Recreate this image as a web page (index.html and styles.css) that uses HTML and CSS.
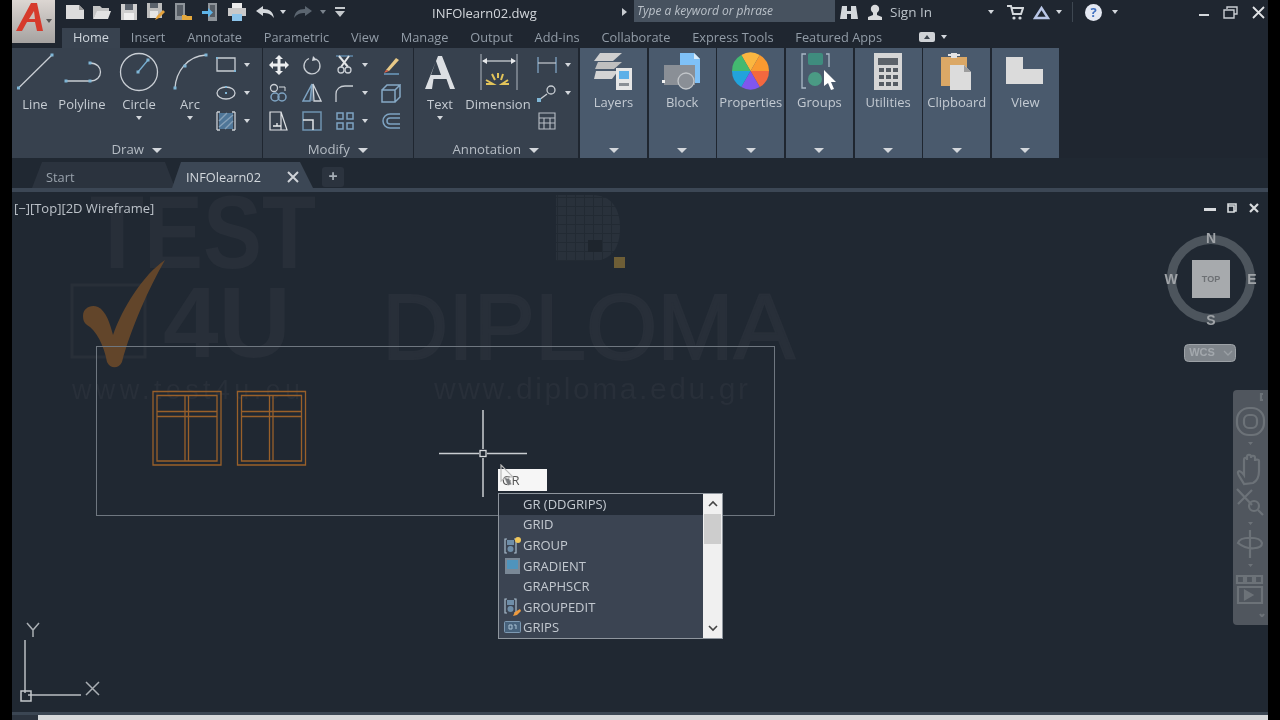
FILE: index.html
```html
<!DOCTYPE html>
<html lang="en">
<head>
<meta charset="utf-8">
<title>INFOlearn02.dwg</title>
<link rel="stylesheet" href="styles.css">
</head>
<body>
<div class="app">
  <div class="logo">
    <svg width="30" height="32" viewBox="0 0 30 32"><path d="M1 29 16 1h6l6 28h-6l-2-9h-8l-5 9z" fill="#d63a2c"/><path d="M14 17h6l-1-8z" fill="#cdbfba"/></svg>
    <i class="caret dark"></i>
  </div>
  <header class="titlebar">
    <div class="qat">
      <span class="q"><svg width="20" height="18" viewBox="0 0 20 18"><path d="M1 2h13l5 5v9H1z" fill="#dcdcdc"/><path d="M14 2v5h5z" fill="#9a9a9a"/></svg></span>
      <span class="q"><svg width="20" height="18" viewBox="0 0 20 18"><path d="M1 16V3h7l2 2h7v3H6z" fill="#c4c4c4"/><path d="M1 16 5 8h14l-3 8z" fill="#e2e2e2"/></svg></span>
      <span class="q"><svg width="18" height="18" viewBox="0 0 18 18"><path d="M1 1h16v16H1z" fill="#cfcfcf"/><path d="M5 1h8v6H5z" fill="#5a626c"/><path d="M4 10h10v7H4z" fill="#efefef"/></svg></span>
      <span class="q"><svg width="20" height="20" viewBox="0 0 20 20"><path d="M1 1h15v15H1z" fill="#bdbdbd"/><path d="M4 1h8v5H4z" fill="#5a626c"/><path d="M4 9h8v7H4z" fill="#e5e5e5"/><path d="m9 18 2-4 6-6 2 2-6 6z" fill="#e4a23c"/></svg></span>
      <span class="q"><svg width="20" height="20" viewBox="0 0 20 20"><path d="M2 1h10v17H2z" fill="#8e949a"/><path d="M4 3h6v11H4z" fill="#565d65"/><path d="M9 13h4l1 1h5v4H9z" fill="#e5a83c"/></svg></span>
      <span class="q"><svg width="20" height="20" viewBox="0 0 20 20"><path d="M8 1h9v18H8z" fill="#8e949a"/><path d="M10 3h5v12h-5z" fill="#565d65"/><path d="M2 9h6V6l5 4.500L8 15v-3H2z" fill="#5eb4e8"/></svg></span>
      <span class="q"><svg width="20" height="20" viewBox="0 0 20 20"><path d="M5 1h10v5H5z" fill="#ececec"/><path d="M1 6h18v8H1z" fill="#c9c9c9"/><path d="M5 12h10v7H5z" fill="#8cc4ea"/></svg></span>
      <span class="q wide"><svg width="20" height="14" viewBox="0 0 20 14"><path d="M1 6 8 1v3c7 0 10 3 11 9-3-4-6-5-11-5v3z" fill="#d4d8dc"/></svg></span>
      <span class="q thin"><i class="caret"></i></span>
      <span class="q redo"><svg width="20" height="14" viewBox="0 0 20 14"><path d="M19 6 12 1v3C5 4 2 7 1 13c3-4 6-5 11-5v3z" fill="#5b6570"/></svg></span>
      <span class="q thin"><i class="caret dim"></i></span>
      <span class="q more"><svg width="10" height="10" viewBox="0 0 10 10"><path d="M0 0h10v2H0zM0 4h10L5 10z" fill="#c4c8cc"/></svg></span>
    </div>
    <div class="doc-title">INFOlearn02.dwg</div>
    <i class="play"></i>
    <div class="search">Type a keyword or phrase</div>
    <span class="binoc"><svg width="18" height="15" viewBox="0 0 18 15"><path d="M2 1h5v5h4V1h5l2 13h-7V9H7v5H0z" fill="#d4d8dc"/></svg></span>
    <span class="user"><svg width="16" height="16" viewBox="0 0 16 16"><circle cx="8" cy="5" r="4.200" fill="#d8dadc"/><path d="M6 8h4v3l5 2v3H1v-3l5-2z" fill="#d8dadc"/></svg></span>
    <span class="signin">Sign In</span>
    <i class="caret c-sign"></i>
    <span class="cart"><svg width="17" height="15" viewBox="0 0 17 15"><path d="M0 1h4l2 8h8l2-6H5" fill="none" stroke="#d4d8dc" stroke-width="2"/><circle cx="7" cy="13" r="1.600" fill="#d4d8dc"/><circle cx="13" cy="13" r="1.600" fill="#d4d8dc"/></svg></span>
    <span class="tri"><svg width="17" height="15" viewBox="0 0 17 15"><path d="M8.500 3 15 13H2z" fill="none" stroke="#b9c6e6" stroke-width="2.400"/></svg></span>
    <i class="caret c-tri"></i>
    <span class="vsep"></span>
    <span class="help">?</span>
    <i class="caret c-help"></i>
    <div class="winctl">
      <svg width="10" height="10" viewBox="0 0 10 10"><path d="M0 7h10v2H0z" fill="#d4d8dc"/></svg>
      <svg width="15" height="13" viewBox="0 0 15 13"><path d="M4 3V1h10v7h-3M1 4h10v8H1z" fill="none" stroke="#c9cdd2" stroke-width="1.400"/></svg>
      <svg width="13" height="13" viewBox="0 0 13 13"><path d="m1 1 11 11M12 1 1 12" stroke="#e0e2e5" stroke-width="1.800"/></svg>
    </div>
  </header>

  <nav class="tabs">
    <span class="tab active">Home</span><span class="tab">Insert</span><span class="tab">Annotate</span><span class="tab">Parametric</span><span class="tab">View</span><span class="tab">Manage</span><span class="tab">Output</span><span class="tab">Add-ins</span><span class="tab">Collaborate</span><span class="tab">Express Tools</span><span class="tab">Featured Apps</span>
    <span class="tab-ctl"><svg width="16" height="10" viewBox="0 0 16 10"><rect width="16" height="10" rx="2" fill="#cfd2d6"/><path d="m8 3 3 4H5z" fill="#3a424c"/></svg></span>
    <i class="caret c-tabs"></i>
  </nav>

  <section class="ribbon">
    <div class="panel p-draw">
      <div class="grid g-draw">
        <div class="big">
          <svg width="46" height="46" viewBox="12 50 46 46"><path d="M18.500 88 52 55" class="st"/><rect x="17" y="86.500" width="3" height="3" class="nd"/><rect x="50.500" y="53.500" width="3" height="3" class="nd"/></svg>
          <span>Line</span>
        </div>
        <div class="big">
          <svg width="48" height="46" viewBox="58 50 48 46"><path d="M66 81h24c14 0 14-18 0-18" class="st"/><rect x="64.500" y="79.500" width="3" height="3" class="nd"/><rect x="88.500" y="79.500" width="3" height="3" class="nd"/><rect x="88.500" y="61.500" width="3" height="3" class="nd"/></svg>
          <span>Polyline</span>
        </div>
        <div class="big">
          <svg width="66" height="46" viewBox="106 50 66 46"><circle cx="139" cy="72" r="18.500" class="st"/><path d="m138 72 10-12" class="bl"/><rect x="136.500" y="70.500" width="3" height="3" class="nd"/><rect x="146.500" y="58.500" width="3" height="3" class="nd"/></svg>
          <span>Circle</span><i class="caret"></i>
        </div>
        <div class="big">
          <svg width="36" height="46" viewBox="172 50 36 46"><path d="M175 88c1-16 12-32 31-33" class="st"/><rect x="173.500" y="86.500" width="3" height="3" class="nd"/><rect x="183.500" y="64.500" width="3" height="3" class="nd"/><rect x="204.500" y="53.500" width="3" height="3" class="nd"/></svg>
          <span>Arc</span><i class="caret"></i>
        </div>
        <div class="smalls">
          <div class="s"><svg width="20" height="20" viewBox="0 0 20 20"><path d="M1 3h18v13H1z" class="st"/><rect x="0" y="2" width="2" height="2" class="nd"/><rect x="18" y="15" width="2" height="2" class="nd"/></svg><i class="caret"></i></div>
          <div class="s"><svg width="20" height="20" viewBox="0 0 20 20"><ellipse cx="10" cy="10" rx="9" ry="6" class="st"/><rect x="9" y="9" width="2" height="2" class="nd"/><rect x="9" y="3" width="2" height="2" class="nd"/></svg><i class="caret"></i></div>
          <div class="s"><svg width="20" height="20" viewBox="0 0 20 20"><path d="M3 2h14v16H3z" fill="#4f7698"/><path d="m3 10 8-8m-8 14L17 4m-8 14 8-8" stroke="#86a0b8" stroke-width="1.400"/><path d="M1 1v18M19 1v18M1 1h3M16 1h3M1 19h3M16 19h3" class="st"/></svg><i class="caret"></i></div>
        </div>
      </div>
      <div class="ptitle">Draw <i class="caret"></i></div>
    </div>

    <div class="panel p-mod">
      <div class="grid g-mod">
        <div class="m"><svg width="20" height="20" viewBox="0 0 20 20"><path d="m10 0 4 4h-2.500v4.500H16V6l4 4-4 4v-2.500h-4.500V16H14l-4 4-4-4h2.500v-4.500H4V14l-4-4 4-4v2.500h4.500V4H6z" fill="#eceef0"/></svg></div>
        <div class="m"><svg width="20" height="20" viewBox="0 0 20 20"><path d="M7 3.500a8 8 0 1 0 7 .500" class="st"/><path d="m10 6 1-5 4 4z" fill="#cfd4da"/></svg></div>
        <div class="m w"><svg width="20" height="20" viewBox="0 0 20 20"><path d="M1 1h17" stroke="#5f87a8" stroke-width="1.500"/><path d="m4 1 9 11M14 1 6 12" stroke="#e4e6e8" stroke-width="2"/><circle cx="6" cy="15" r="3" class="st"/><circle cx="13" cy="15" r="3" class="st"/></svg><i class="caret"></i></div>
        <div class="m"><svg width="20" height="20" viewBox="0 0 20 20"><path d="m5 15 10-12 3 2-10 11z" fill="#e8c987"/><path d="m5 15 3 1-5 2z" fill="#e0644a"/><path d="M3 19h15" stroke="#6e9cc0" stroke-width="1.500"/></svg></div>
        <div class="m"><svg width="20" height="20" viewBox="0 0 20 20"><circle cx="5" cy="5" r="3.500" class="st"/><path d="M10 4h6v4" stroke="#d7dce0" fill="none"/><circle cx="6" cy="14" r="4" class="bl2"/><circle cx="13" cy="14" r="4" class="bl2"/></svg></div>
        <div class="m"><svg width="20" height="20" viewBox="0 0 20 20"><path d="M10 1 1 18h7z" fill="none" stroke="#7ea3c2" stroke-width="1.500"/><path d="M10 1v17" stroke="#7ea3c2"/><path d="m11 1 8 17h-7z" fill="none" stroke="#cfd4da" stroke-width="1.300"/></svg></div>
        <div class="m w"><svg width="20" height="20" viewBox="0 0 20 20"><path d="M1 19V11c0-5 4-8 9-8h8" class="st"/></svg><i class="caret"></i></div>
        <div class="m"><svg width="20" height="20" viewBox="0 0 20 20"><path d="M1 7h13v12H1zM1 7l5-5h13l-5 5M19 2v12l-5 5" fill="none" stroke="#86a9c6" stroke-width="1.500"/></svg></div>
        <div class="m"><svg width="20" height="20" viewBox="0 0 20 20"><path d="M1 1h11v18H1zM12 1l6 18h-6" fill="none" stroke="#dfe2e5" stroke-width="1.200"/><path d="M4 15h8M8 12v3" stroke="#eceef0" stroke-width="1.300"/></svg></div>
        <div class="m"><svg width="20" height="20" viewBox="0 0 20 20"><path d="M1 1h18v18H1z" fill="none" stroke="#6f93b0" stroke-width="1.500"/><path d="M1 9h10v10" fill="none" stroke="#e2e5e8" stroke-width="1.500"/></svg></div>
        <div class="m w"><svg width="20" height="20" viewBox="0 0 20 20"><path d="M2 2h6v6H2zM12 2h6v6h-6zM2 12h6v6H2zM12 12h6v6h-6z" fill="none" stroke="#7ea3c2" stroke-width="1.500"/></svg><i class="caret"></i></div>
        <div class="m"><svg width="20" height="20" viewBox="0 0 20 20"><path d="M19 3H9a7 7 0 0 0 0 14h10M19 7H9a3 3 0 0 0 0 6h10" fill="none" stroke="#7ea3c2" stroke-width="1.500"/></svg></div>
      </div>
      <div class="ptitle">Modify <i class="caret"></i></div>
    </div>

    <div class="panel p-ann">
      <div class="grid g-ann">
        <div class="big">
          <svg width="52" height="46" viewBox="414 50 52 46"><path d="M425 89 438 56h4l13 33h-5l-3.500-10h-13L432 89zM431 75h10l-5-14z" fill="#dcdfe3"/></svg>
          <span>Text</span><i class="caret"></i>
        </div>
        <div class="big">
          <svg width="64" height="46" viewBox="466 50 64 46"><path d="M481 54v36M517 54v36" stroke="#9ba3ac" stroke-width="1.200"/><path d="M483 61h32" stroke="#d7dce0" stroke-width="1.200"/><path d="m482 61 5-3v6zM516 61l-5-3v6z" fill="#e7e9eb"/><path d="M486 84h7l-7-4M509 84h-7l6-4M495 80l-3-6M501 80l2-6M498 78v-5" stroke="#e2c45a" stroke-width="2" fill="none"/></svg>
          <span>Dimension</span>
        </div>
        <div class="smalls a">
          <div class="s"><svg width="20" height="20" viewBox="0 0 20 20"><path d="M1 2v16M19 2v16" stroke="#7ea3c2" stroke-width="1.300"/><path d="M1 8h18" stroke="#c7ccd2" stroke-width="1.200"/></svg><i class="caret"></i></div>
          <div class="s"><svg width="20" height="20" viewBox="0 0 20 20"><path d="m2 17 8-6" class="st"/><circle cx="14" cy="7" r="4" class="st"/><rect x="0" y="15" width="4" height="4" class="nd"/></svg><i class="caret"></i></div>
          <div class="s"><svg width="20" height="20" viewBox="0 0 20 20"><path d="M2 2h16v16H2zM2 7h16M2 12h16M7 7v11M13 7v11" fill="none" stroke="#b8bec5" stroke-width="1.100"/></svg></div>
        </div>
      </div>
      <div class="ptitle">Annotation <i class="caret"></i></div>
    </div>

    <div class="stack">
      <div class="cpanel">
        <svg width="67" height="44" viewBox="580 50 67 44"><path d="m600 53 22 0-9 8h-19z" fill="#cfcfcf"/><path d="m598 62h24l-8 7h-19z" fill="#bfbfbf"/><path d="m596 71h22l-6 8h-18z" fill="#d4d4d4"/><path d="M616 68h16v22h-16z" fill="#e6e6e6"/><path d="M619 71h10v8h-10z" fill="#5eb0e8"/><path d="M619 83h10v3h-10z" fill="#8a8f95"/></svg>
        <span>Layers</span><i class="caret"></i>
      </div>
      <div class="cpanel">
        <svg width="67" height="44" viewBox="649 50 67 44"><path d="M680 53h14l6 6v24h-20z" fill="#7fc1f7"/><path d="M694 53v6h6z" fill="#d8ecfb"/><path d="M664 65h31v20h-31z" fill="#8a8f96"/><circle cx="686" cy="81" r="8" fill="#8a8f96" stroke="#c2c6ca" stroke-width="1.300"/><rect x="662" y="80" width="3" height="3" fill="#f2f2f2"/></svg>
        <span>Block</span><i class="caret"></i>
      </div>
      <div class="cpanel">
        <svg width="67" height="44" viewBox="-33.500 -21 67 44"><path d="M0 0-9.250-16.020A18.500 18.500 0 0 1 9.250-16.020z" fill="#fbb640"/><path d="M0 0 9.250-16.020A18.500 18.500 0 0 1 18.500 0z" fill="#fa9a30"/><path d="M0 0H18.500A18.500 18.500 0 0 1 9.250 16.020z" fill="#f4683f"/><path d="M0 0 9.250 16.020A18.500 18.500 0 0 1-9.250 16.020z" fill="#8056ee"/><path d="M0 0-9.250 16.020A18.500 18.500 0 0 1-18.500 0z" fill="#22a3dc"/><path d="M0 0H-18.500A18.500 18.500 0 0 1-9.250-16.020z" fill="#43b970"/></svg>
        <span>Properties</span><i class="caret"></i>
      </div>
      <div class="cpanel">
        <svg width="67" height="44" viewBox="787 50 67 44"><path d="M807 54h-4v34h4M827 54h3v13" fill="none" stroke="#a9b8c6" stroke-width="1.300"/><rect x="809" y="53" width="15" height="12" rx="2" fill="#3f8c7e"/><circle cx="816" cy="79" r="7" fill="#4a9a84"/><path d="m825 70 0 16 4-3 3 7 3-1-3-7h5z" fill="#fff"/></svg>
        <span>Groups</span><i class="caret"></i>
      </div>
      <div class="cpanel">
        <svg width="67" height="44" viewBox="855 50 67 44"><path d="M874 53h28v37h-28z" fill="#d6d6d6"/><path d="M878 58h20v7h-20z" fill="#5c6269"/><path d="M879 68h5v4h-5zM886 68h5v4h-5zM893 68h5v4h-5zM879 75h5v4h-5zM886 75h5v4h-5zM893 75h5v4h-5zM879 82h5v4h-5zM886 82h5v4h-5zM893 82h5v4h-5z" fill="#555b62"/></svg>
        <span>Utilities</span><i class="caret"></i>
      </div>
      <div class="cpanel">
        <svg width="67" height="44" viewBox="924 50 67 44"><path d="M942 57h26v29h-26z" fill="#dba866"/><path d="M949 56h12v-2h-12z" fill="#e4e4e4"/><path d="M952 53h6v5h-6z" fill="#e4e4e4"/><path d="M951 65h14l7 7v18h-21z" fill="#dcdcdc"/><path d="M965 65v7h7z" fill="#9d9d9d"/></svg>
        <span>Clipboard</span><i class="caret"></i>
      </div>
      <div class="cpanel">
        <svg width="67" height="44" viewBox="993 50 67 44"><path d="M1007 57h17v12h20v15h-37z" fill="#dbdbdb"/></svg>
        <span>View</span><i class="caret"></i>
      </div>
    </div>
  </section>

  <div class="filetabs">
    <div class="ftab start">Start</div>
    <div class="ftab current"><span>INFOlearn02</span><svg width="12" height="12" viewBox="0 0 12 12"><path d="m1 1 10 10M11 1 1 11" stroke="#cfd3d8" stroke-width="2"/></svg></div>
    <div class="fplus">+</div>
  </div>

  <main class="canvas">
    <svg class="drawing" width="1256" height="520" viewBox="12 192 1256 520">
      <defs>
        <pattern id="dgrid" width="9" height="9" patternUnits="userSpaceOnUse"><path d="M0 0h9v9H0z" fill="#29313b"/><path d="M8.500 0v9M0 8.500h9" stroke="#222a33"/></pattern>
      </defs>
      <g class="wm">
        <text x="90" y="268" class="wm-test" textLength="226" lengthAdjust="spacingAndGlyphs">TEST</text>
        <text x="163" y="357" class="wm-4u">4U</text>
        <rect x="72" y="285" width="73" height="72" fill="none" stroke="#282f38" stroke-width="3"/>
        <text x="72" y="399" class="wm-url" textLength="228">www.test4u.eu</text>
        <text x="382" y="359" class="wm-dip" textLength="413" lengthAdjust="spacingAndGlyphs">DIPLOMA</text>
        <text x="434" y="399" class="wm-url2" textLength="314">www.diploma.edu.gr</text>
        <path d="M556 195h36c20 0 28 14 28 33s-8 33-28 33h-36z" fill="url(#dgrid)"/>
        <path d="M588 240h14v12h-14z" fill="#1e252d"/>
      </g>
      <rect x="614" y="257" width="11" height="11" fill="#6e5e36"/>
      <path d="M83 316c0-8 8-12 15-9 8 4 12 16 15 28 10-28 30-60 52-75-16 28-34 68-43 102-3 7-12 7-15 0-3-17-11-32-20-37-3-2-4-5-4-9z" fill="#62452a"/>
      <rect x="96.500" y="346.500" width="678" height="169" class="outline"/>
      <g class="win">
        <path d="M153 391.500h68v73.500h-68zM157 395.500h60v65.500h-60zM185 395.500v65.500M188.500 395.500v65.500M157 411.500h60M157 416.500h60"/>
        <path d="M237.500 391.500h68v73.500h-68zM241.500 395.500h60v65.500h-60zM269.500 395.500v65.500M273 395.500v65.500M241.500 411.500h60M241.500 416.500h60"/>
      </g>
      <path d="M483 410v39M483 458v39M439 453.500h40M487 453.500h40" stroke="#c9cdd1" stroke-width="1.500"/>
      <rect x="480" y="450.500" width="6" height="6" fill="none" stroke="#d6d9dc" stroke-width="1.300"/>
      <path d="M25 640v53M28 695h53" stroke="#b9bdc2" stroke-width="1.500"/>
      <rect x="21" y="691" width="10" height="10" fill="none" stroke="#c4c8cc" stroke-width="1.500"/>
      <path d="m27 623 6 7 6-7M33 630v7M86 682l13 13M99 682l-13 13" stroke="#a9aeb3" stroke-width="1.500" fill="none"/>
      <g class="vp-ctl"><path d="M1204 209.500h12" stroke-width="3"/><path d="M1228 206v-2h8v7h-2M1228 206h6v6h-6z" fill="none" stroke-width="1.600"/><path d="m1250 204 8 8M1258 204l-8 8" stroke-width="2.200"/></g>
      <circle cx="1211" cy="279" r="39.500" fill="none" stroke="#4d555d" stroke-width="9"/>
      <rect x="1192" y="260" width="38" height="38" fill="#a7aaad"/>
      <text x="1211" y="282" class="top">TOP</text>
      <text x="1211" y="243" class="dir">N</text><text x="1211" y="325" class="dir">S</text><text x="1171" y="284" class="dir">W</text><text x="1252" y="284" class="dir">E</text>
      <rect x="1184.500" y="344.500" width="51" height="17" rx="4" fill="#7f858b" stroke="#9da2a7"/>
      <text x="1202" y="356" class="wcs">WCS</text>
      <path d="m1224 351 4 4 4-4" fill="none" stroke="#9a9fa4" stroke-width="1.300"/>
    </svg>

    <div class="vp-label">[−][Top][2D Wireframe]</div>

    <aside class="navbar">
      <svg width="35" height="235" viewBox="0 0 35 235">
        <g fill="none" stroke="#6c7278" stroke-width="2.200">
          <path d="M30 4h-2v6h2"/>
          <rect x="4" y="18" width="27" height="27" rx="12"/><rect x="11" y="25" width="13" height="13" rx="5"/>
          <path d="M11 94c-4-7-7-10-6-12s4 0 6 3V70c0-3 3-3 3 0v-3c0-3 4-3 4 0v1c0-3 4-3 4 0v3c0-2 4-2 4 0v10c0 6-2 10-6 12z"/>
          <path d="m4 99 15 16M19 100 5 114"/><circle cx="21" cy="116" r="5"/><path d="m25 120 5 5"/>
          <path d="M17 140v28M5 153c2-7 22-7 24 0 0 6-14 8-24 0z"/>
          <path d="M4 186h7v7H4zM13 186h7v7h-7zM22 186h7v7h-7zM5 197h24v16H5z"/><path d="m12 201 7 4-7 4z" fill="#6c7278"/>
          <path d="M27 224c2 3 2 3 4 0"/>
        </g>
        <path d="m15 52 5 0-2.500 3zM15 132h5l-2.500 3zM15 174h5l-2.500 3z" fill="#6c7278"/>
      </svg>
    </aside>

    <div class="dyn-input">GR</div>
    <svg class="pointer" width="14" height="24" viewBox="0 0 14 24"><path d="M1 1v16l4-3 3 7 3-1-3-7h5z" fill="none" stroke="#b9b9b9" stroke-width="1.200"/><path d="M5 14l3 7 3-1-2-5z" fill="#77797c"/></svg>

    <div class="autocomplete">
      <ul class="ac-list">
        <li class="sel"><span class="ac-ico"></span>GR (DDGRIPS)</li>
        <li><span class="ac-ico"></span>GRID</li>
        <li><span class="ac-ico"><svg width="19" height="18" viewBox="0 0 19 18"><path d="M4 3H2v14h2M11 3h2v14h-2" fill="none" stroke="#a9bccc" stroke-width="1.200"/><rect x="4" y="4" width="7" height="5" fill="#6f8ea8"/><circle cx="7.500" cy="13" r="3" fill="#6f8ea8"/><circle cx="15" cy="4" r="3" fill="#f0c65a"/></svg></span>GROUP</li>
        <li><span class="ac-ico"><svg width="19" height="18" viewBox="0 0 19 18"><rect x="2" y="1" width="15" height="16" fill="#7a8896"/><rect x="4" y="3" width="11" height="9" fill="#4f94bd"/></svg></span>GRADIENT</li>
        <li><span class="ac-ico"></span>GRAPHSCR</li>
        <li><span class="ac-ico"><svg width="19" height="18" viewBox="0 0 19 18"><path d="M4 1H2v14h2M11 1h2v14h-2" fill="none" stroke="#a9bccc" stroke-width="1.200"/><rect x="4" y="2" width="7" height="5" fill="#6f8ea8"/><circle cx="7.500" cy="11" r="3" fill="#6f8ea8"/><path d="m10 18 2-4 5-3 1 2-4 4z" fill="#ee9a3c"/></svg></span>GROUPEDIT</li>
        <li><span class="ac-ico"><svg width="19" height="14" viewBox="0 0 19 14"><rect x="1.500" y="1.500" width="16" height="11" rx="1" fill="#47627c" stroke="#7d99b2"/><path d="M6 5h3v4H6zM11 5h2v4" fill="none" stroke="#a9c0d2"/></svg></span>GRIPS</li>
      </ul>
      <div class="ac-scroll">
        <svg width="12" height="8" viewBox="0 0 12 8"><path d="m2 6 4-4 4 4" fill="none" stroke="#444" stroke-width="1.600"/></svg>
        <div class="ac-track"><div class="ac-thumb"></div></div>
        <svg width="12" height="8" viewBox="0 0 12 8"><path d="m2 2 4 4 4-4" fill="none" stroke="#444" stroke-width="1.600"/></svg>
      </div>
    </div>
  </main>

  <footer class="bottom"><div class="grip"></div><div class="hscroll"></div></footer>
</div>
</body>
</html>
```

FILE: styles.css
```css
* { box-sizing: border-box; }
html, body { margin: 0; height: 100%; background: #000; overflow: hidden; }
body { font-family: "Open Sans", "Noto Sans", sans-serif; }
.app { position: relative; width: 1256px; height: 720px; margin-left: 12px; background: #202832; display: flex; flex-direction: column; overflow: hidden; filter: blur(.4px); color: #c6ccd3; }

.caret { display: inline-block; width: 0; height: 0; border-left: 3.5px solid transparent; border-right: 3.5px solid transparent; border-top: 4px solid #d3d7dc; flex: none; }
.caret.dark { border-top-color: #555; margin-top: 17px; }
.caret.dim { border-top-color: #7a838c; }

.logo { position: absolute; left: 0; top: 0; width: 43px; height: 43px; background: linear-gradient(#dcd6d2, #a5a2a0); display: flex; align-items: flex-start; padding: 2px 0 0 3px; gap: 1px; z-index: 3; }

.titlebar { height: 24px; flex: none; display: flex; align-items: center; background: #1f2630; }
.qat { display: flex; align-items: center; margin-left: 49px; height: 24px; }
.q { width: 27px; display: flex; justify-content: center; align-items: center; }
.q.wide { width: 29px; }
.q.thin { width: 8px; }
.q.redo { width: 32px; }
.q.more { width: 22px; margin-left: 2px; }
.doc-title { margin-left: 81px; font-size: 13px; color: #d2d6db; width: 185px; padding-top: 1px; }
.play { width: 0; height: 0; border-top: 4px solid transparent; border-bottom: 4px solid transparent; border-left: 5px solid #c8ccd1; margin-left: 5px; }
.search { width: 201px; height: 22px; margin-left: 7px; background: #47525f; font-size: 12px; font-style: italic; color: #b9c0c8; padding: 2px 3px; align-self: flex-start; }
.binoc { margin-left: 5px; display: flex; }
.user { margin-left: 9px; display: flex; }
.signin { margin-left: 7px; font-size: 13.5px; color: #bcc3ca; width: 48px; }
.c-sign { margin-left: 50px; }
.cart { margin-left: 13px; display: flex; }
.tri { margin-left: 9px; display: flex; }
.c-tri { margin-left: 6px; }
.vsep { width: 1px; height: 20px; background: #3e4751; margin-left: 10px; }
.help { width: 17px; height: 17px; border-radius: 50%; background: #e4e8f2; color: #3f6fc0; font-size: 13px; font-weight: 700; line-height: 17px; text-align: center; margin-left: 12px; }
.c-help { margin-left: 10px; }
.winctl { margin-left: 81px; display: flex; align-items: center; gap: 14px; }

.tabs { height: 24px; flex: none; display: flex; align-items: flex-end; background: #1f2630; padding-left: 50px; }
.tab { height: 20px; line-height: 19px; font-size: 12.8px; color: #929ca7; padding: 0 10.9px; white-space: nowrap; }
.tab.active { background: #38424f; color: #cfd6dd; }
.tab-ctl { display: flex; margin-left: 26px; margin-bottom: 6px; }
.c-tabs { margin-left: 6px; margin-bottom: 9px; }

.ribbon { height: 110px; flex: none; display: flex; background: #1f2630; }
.panel { display: flex; flex-direction: column; background: #37414e; margin-right: 1px; height: 110px; }
.p-draw { width: 250px; }
.p-mod { width: 150px; }
.p-ann { width: 164px; margin-right: 2px; }
.grid { height: 92px; display: grid; padding-top: 2px; }
.g-draw { grid-template-columns: 46px 48px 66px 36px 54px; }
.g-mod { grid-template-columns: 32px 34px 46px 32px; grid-template-rows: repeat(3, 28px); padding-top: 3px; }
.g-ann { grid-template-columns: 52px 64px 48px; }
.big { display: flex; flex-direction: column; align-items: center; font-size: 13px; line-height: 17px; color: #c6ccd3; white-space: nowrap; }
.big .caret { margin-top: 3px; }
.smalls { display: grid; grid-template-rows: repeat(3, 28px); padding-top: 1px; }
.s { display: flex; align-items: center; padding-left: 8px; gap: 8px; }
.smalls.a .s { padding-left: 7px; gap: 8px; }
.m { display: flex; align-items: center; justify-content: center; }
.m.w { justify-content: flex-start; padding-left: 6px; gap: 7px; }
.ptitle { height: 18px; line-height: 19px; text-align: center; font-size: 13.2px; color: #b5bcc4; }
.ptitle .caret { margin-left: 5px; vertical-align: middle; border-left-width: 5px; border-right-width: 5px; border-top-width: 5px; }

.st { fill: none; stroke: #c9ced4; stroke-width: 1.3; }
.bl { fill: none; stroke: #78aed0; stroke-width: 1.3; }
.bl2 { fill: none; stroke: #7ea3c2; stroke-width: 1.5; }
.nd { fill: #7fb6d6; }

.stack { display: flex; gap: 1.67px; height: 110px; }
.cpanel { width: 67px; height: 110px; background: #4a5a6d; display: flex; flex-direction: column; align-items: center; padding: 2px 0 4px; }
.cpanel svg { flex: none; }
.cpanel span { font-size: 13px; line-height: 17px; margin-top: 0; color: #c3cad2; white-space: nowrap; }
.cpanel .caret { margin-top: auto; border-left-width: 5px; border-right-width: 5px; border-top-width: 5px; margin-bottom: 1px; }

.filetabs { height: 34px; flex: none; display: flex; align-items: flex-end; padding-left: 20px; background: linear-gradient(#202832 0 30px, #3c4755 30px); padding-bottom: 4px; }
.ftab { height: 26px; font-size: 12.8px; line-height: 30px; }
.start { width: 143px; background: #2b333e; color: #99a2ac; padding-left: 14px; clip-path: polygon(10px 0, 133px 0, 143px 100%, 0 100%); }
.current { width: 141px; background: #3c4755; color: #d3d8dd; padding: 3px 14px 0; display: flex; align-items: center; justify-content: space-between; line-height: 20px; clip-path: polygon(9px 0, 128px 0, 141px 100%, 0 100%); margin-left: -3px; }
.fplus { width: 22px; height: 20px; margin-left: 9px; margin-bottom: 1px; background: #2b333e; border-radius: 3px; text-align: center; font-size: 16px; line-height: 19px; font-weight: 700; color: #a6aeb6; }

.canvas { position: relative; flex: 1; background: #202832; min-height: 0; }
.drawing { position: absolute; inset: 0; display: block; }
.wm text { font-family: "Liberation Sans", sans-serif; fill: #282f39; }
.wm-test { font-size: 104px; font-weight: 700; }
.wm-4u { font-size: 100px; font-weight: 700; }
.wm-url { font-size: 27px; }
.wm-url2 { font-size: 30px; }
.wm-dip { font-size: 92px; stroke: #282f39; stroke-width: 2px; }
.outline { fill: none; stroke: #6f7780; stroke-width: 1; }
.win { fill: none; stroke: #99602a; stroke-width: 1.3; }
.vp-ctl { stroke: #d8dbde; }
.top { font: 700 9px "Liberation Sans", sans-serif; fill: #6d7074; text-anchor: middle; }
.dir { font: 700 14px "Liberation Sans", sans-serif; fill: #a0a4a8; text-anchor: middle; }
.wcs { font: 700 11px "Liberation Sans", sans-serif; fill: #a3a8ad; text-anchor: middle; }
.vp-label { position: absolute; left: 2px; top: 6px; font-size: 13px; line-height: 20px; color: #bcc2c9; }
.navbar { position: absolute; right: 0; top: 198px; width: 35px; height: 235px; background: #50565e; border-radius: 4px 0 0 4px; }
.navbar svg { display: block; filter: blur(.6px); }
.dyn-input { position: absolute; left: 486px; top: 277px; width: 49px; height: 22px; background: #f6f6f6; color: #555; font-size: 13px; line-height: 22px; padding-left: 4px; }
.pointer { position: absolute; left: 488px; top: 272px; }
.autocomplete { position: absolute; left: 486px; top: 301px; width: 225px; height: 146px; display: flex; border: 1px solid #8f969e; background: #3b4452; }
.ac-list { list-style: none; margin: 0; padding: 0; flex: 1; }
.ac-list li { height: 20.6px; padding-bottom: 1px; font-size: 13px; color: #c3c9d0; display: flex; align-items: center; }
.ac-list li.sel { background: #232b36; }
.ac-ico { width: 24px; flex: none; display: flex; justify-content: center; padding-left: 2px; }
.ac-scroll { width: 19px; background: #f0f0f0; display: flex; flex-direction: column; align-items: center; justify-content: space-between; padding: 6px 0; }
.ac-track { flex: 1; width: 100%; padding-top: 6px; }
.ac-thumb { height: 30px; background: #cdcdcd; width: 17px; margin: 0 auto; }

.bottom { height: 8px; flex: none; background: #3b4653; display: flex; align-items: flex-end; }
.grip { width: 26px; height: 5px; background: #2b333e; }
.hscroll { flex: 1; height: 5px; background: #d6d8da; }
```
